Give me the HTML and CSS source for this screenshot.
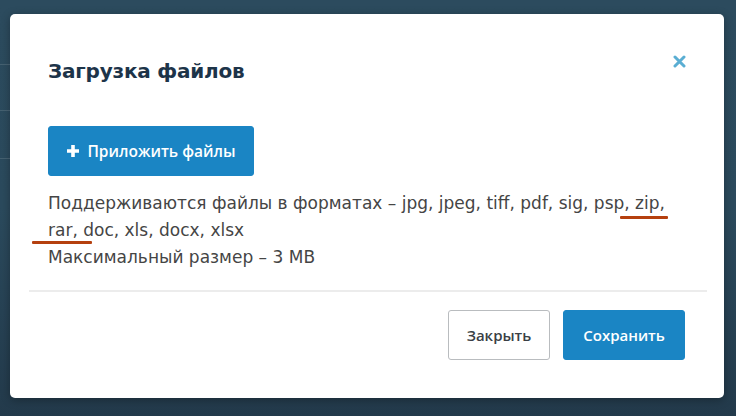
FILE: index.html
```html
<!DOCTYPE html>
<html lang="ru">
<head>
<meta charset="utf-8">
<title>Загрузка файлов</title>
<link rel="stylesheet" href="styles.css">
</head>
<body>
<div class="backdrop-bits">
  <span class="bit bit-1"></span>
  <span class="bit bit-2"></span>
  <span class="bit bit-3"></span>
</div>
<div class="modal">
  <div class="modal-header">
    <h1 class="modal-title">Загрузка файлов</h1>
    <button class="modal-close" aria-label="Закрыть">
      <svg width="13" height="13" viewBox="0 0 13 13"><path d="M2 2 L11 11 M11 2 L2 11" stroke="#5aaed3" stroke-width="3" stroke-linecap="round"/></svg>
    </button>
  </div>
  <div class="modal-body">
    <button class="btn btn-primary btn-attach"><svg class="plus" width="14" height="14" viewBox="0 0 14 14"><path d="M7 1 V13 M1 7 H13" stroke="#fff" stroke-width="3.6"/></svg>Приложить файлы</button>
    <p class="hint">Поддерживаются файлы в форматах – jpg, jpeg, tiff, pdf, sig, psp, zip,<br>rar, doc, xls, docx, xlsx<br>Максимальный размер – 3 MB</p>
    <span class="mark mark-1"></span>
    <span class="mark mark-2"></span>
  </div>
  <div class="modal-footer">
    <button class="btn btn-default">Закрыть</button>
    <button class="btn btn-primary">Сохранить</button>
  </div>
</div>
</body>
</html>
```
FILE: styles.css
```css
html, body {
  margin: 0;
  height: 100%;
}
body {
  width: 736px;
  height: 416px;
  box-sizing: border-box;
  padding: 14px 12px 18px 10px;
  background: linear-gradient(180deg, #2c4b5e 0%, #2b4a5d 50%, #233a4b 100%);
  font-family: "Open Sans", "Noto Sans", sans-serif;
  position: relative;
  overflow: hidden;
}
.backdrop-bits .bit {
  position: absolute;
  left: 0;
  width: 10px;
  height: 1px;
  background: rgba(255,255,255,0.12);
}
.bit-1 { top: 64px; }
.bit-2 { top: 110px; }
.bit-3 { top: 158px; }
.modal {
  width: 714px;
  height: 384px;
  box-sizing: border-box;
  background: #fff;
  border-radius: 5px;
  display: flex;
  flex-direction: column;
  box-shadow: 0 2px 10px rgba(0,0,0,0.3);
}
.modal-header {
  display: flex;
  justify-content: space-between;
  align-items: flex-start;
  padding: 43px 38px 0 38px;
}
.modal-title {
  margin: 0;
  font-family: "DejaVu Sans", "Open Sans", sans-serif;
  font-size: 20px;
  line-height: 28px;
  font-weight: 700;
  color: #1d3449;
  letter-spacing: -0.2px;
}
.modal-close {
  border: 0;
  background: none;
  padding: 0;
  margin-top: -2px;
  width: 14px;
  height: 14px;
  cursor: pointer;
}
.modal-body {
  position: relative;
  padding: 41px 38px 19px 19px;
  border-bottom: 2px solid #ececec;
  margin: 0 17px 0 19px;
}
.btn {
  font-family: inherit;
  font-size: 15px;
  font-weight: 600;
  border-radius: 3px;
  height: 50px;
  box-sizing: border-box;
  cursor: pointer;
}
.btn-primary {
  background: #1a85c4;
  color: #fff;
  border: 1px solid #1a85c4;
}
.btn-default {
  background: #fff;
  color: #3a3f45;
  border: 1px solid #b9bcbf;
}
.btn-attach {
  width: 206px;
  padding: 0;
  display: flex;
  align-items: center;
  justify-content: center;
  gap: 7px;
  font-size: 15.5px;
}
.plus {
  flex: none;
  margin-top: -1px;
}
.hint {
  margin: 14px 0 0 0;
  font-family: "DejaVu Sans", "Open Sans", sans-serif;
  font-size: 17px;
  line-height: 27px;
  color: #454545;
}
.mark {
  position: absolute;
  height: 3px;
  background: #b5400f;
  border-radius: 1px;
}
.mark-1 { left: 591px; top: 131px; width: 48px; }
.mark-2 { left: 3px; top: 156px; width: 60px; }
.modal-footer {
  display: flex;
  justify-content: flex-end;
  gap: 13px;
  padding: 18px 39px 0 0;
}
.modal-footer .btn-default { width: 102px; }
.modal-footer .btn-primary { width: 122px; }
```
